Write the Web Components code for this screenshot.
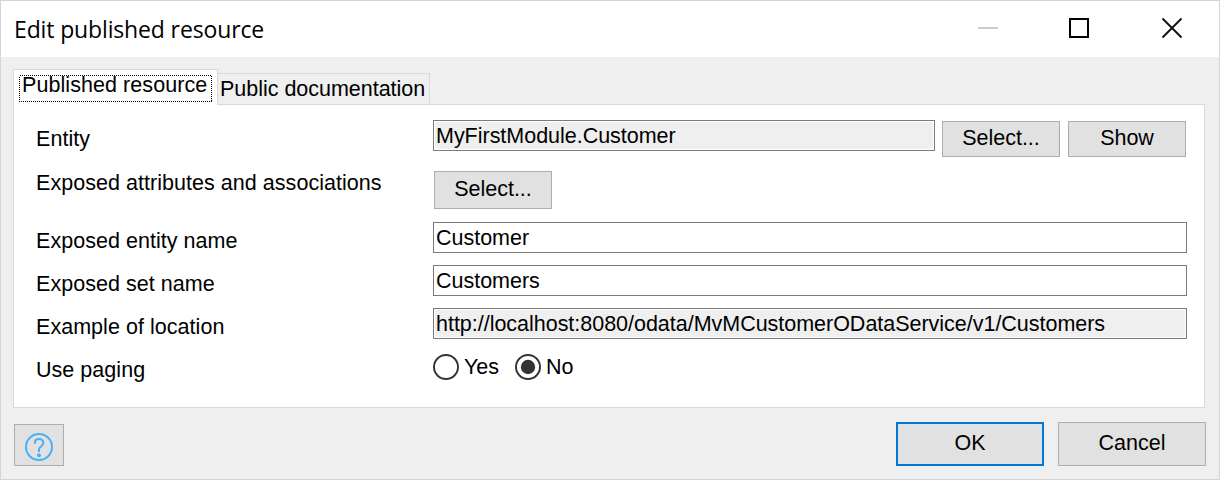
<!DOCTYPE html>
<html lang="en">
<head>
<meta charset="utf-8">
<title>Edit published resource</title>
<style>
html, body { margin: 0; }
body { width: 1220px; height: 480px; overflow: hidden; background: #efefef; color: #000; font: 21.5px/24px "Liberation Sans", Arial, sans-serif; letter-spacing: -.02px; }
</style>
</head>
<body>
<resource-dialog></resource-dialog>
<script>
const define = (name, html, setup) => customElements.define(name, class extends HTMLElement {
  constructor() {
    super();
    this.attachShadow({ mode: "open" }).innerHTML = html;
  }
  connectedCallback() { if (setup) setup(this); }
});

define("title-bar", `
<style>
:host { display: flex; box-sizing: border-box; height: 56px; padding: 0 35px 0 13px; background: #fff; }
.title { flex: 1; font: 23px/30px "Open Sans", "Noto Sans", sans-serif; letter-spacing: -.14px; padding-top: 13px; }
svg { display: block; }
</style>
<div class="title"><slot></slot></div>
<svg width="206" height="56" viewBox="0 0 206 56" fill="none">
<path d="M0 27H20" stroke="#ccc" stroke-width="2"/>
<rect x="92" y="18" width="18" height="18" stroke="#000" stroke-width="2"/>
<path d="M184.5 17.5L203.5 36.5M203.5 17.5L184.5 36.5" stroke="#111" stroke-width="1.9"/>
</svg>`);

define("tab-item", `
<style>
:host { display: block; box-sizing: border-box; height: 31px; border: 1px solid #d9d9d9; border-width: 1px 1px 0 0; padding: 3px 4px 0 2px; width: 212px; white-space: nowrap; }
:host([active]) { width: 205px; height: 36px; border-left-width: 1px; background: #fff; margin-bottom: -1px; padding: 5px 5px 0; letter-spacing: .07px; }
svg { display: none; }
:host([active]) .label { display: grid; width: 193px; height: 27px; }
:host([active]) svg { display: block; grid-area: 1 / 1; }
:host([active]) span { grid-area: 1 / 1; padding-left: 3px; margin-top: -2px; }
</style>
<div class="label"><svg width="193" height="27"><rect x=".5" y=".5" width="192" height="26" fill="none" stroke="#000" stroke-dasharray="1 1" shape-rendering="crispEdges"/></svg><span><slot></slot></span></div>`);

define("form-row", `
<style>
:host { display: grid; grid-template-columns: 397px 1fr; align-items: start; }
.label { padding-top: var(--label-top, 7px); letter-spacing: .04px; white-space: nowrap; }
.control { display: flex; align-items: start; }
</style>
<div class="label"></div><div class="control"><slot></slot></div>`,
el => { el.shadowRoot.querySelector(".label").textContent = el.getAttribute("label"); });

define("text-field", `
<style>
:host { display: block; flex: 1; box-sizing: border-box; height: 31px; border: 1px solid #7a7a7a; padding: 1px; background: #fff; }
.value { height: 27px; line-height: 24px; padding: 2px 0 0 1px; box-sizing: border-box; white-space: nowrap; }
:host([readonly]) .value { background: #efefef; }
</style>
<div class="value"><slot></slot></div>`);

define("push-button", `
<style>
:host { display: flex; box-sizing: border-box; width: 118px; height: 36px; border: 1px solid #adadad; background: #e1e1e1; align-items: center; justify-content: center; padding-bottom: 2px; }
:host([primary]) { border: 2px solid #0078d7; }
</style>
<slot></slot>`);

define("radio-option", `
<style>
:host { display: flex; gap: 5px; }
circle.dot { display: none; }
:host([checked]) circle.dot { display: block; }
span { padding-top: 1px; }
</style>
<svg width="26" height="26"><circle cx="13" cy="13" r="12" fill="#fff" stroke="#333" stroke-width="1.9"/><circle class="dot" cx="13" cy="13" r="7.2" fill="#333"/></svg>
<span><slot></slot></span>`);

define("help-icon", `
<style>:host { display: block; } svg { display: block; }</style>
<svg width="30" height="30" viewBox="0 0 30 30" fill="none" stroke="#49b1f7" stroke-width="2"><circle cx="15" cy="15" r="13"/><path d="M10.9 11.8V11C10.9 8.5 12.6 7 15 7s4.3 1.6 4.3 3.9c0 1.8-1 2.8-2.4 3.7-1.3.8-1.9 1.6-1.9 3V20"/><circle cx="15" cy="23.2" r="2" fill="#49b1f7" stroke="none"/></svg>`);

define("resource-dialog", `
<style>
:host { display: flex; flex-direction: column; box-sizing: border-box; width: 1220px; height: 480px; border: 1px solid #d4d4d4; background: #efefef; }
.tabs { display: flex; align-items: flex-end; height: 35px; margin: 12px 0 0 12px; }
tab-item[active] { position: relative; z-index: 1; }
.panel { box-sizing: border-box; width: 1192px; height: 304px; margin-left: 12px; border: 1px solid #d9d9d9; background: #fff; padding: 15px 17px 0 22px; }
form-row { width: 1151px; }
.r1 { height: 51px; } .r2 { height: 51px; --label-top: 0px; } .r3, .r4 { height: 43px; } .r5 { height: 46px; } .r6 { --label-top: 4px; }
.entity { margin-right: 7px; }
.r1 push-button { margin: 1px 8px 0 0; }
.r1 push-button:last-child { margin-right: 1px; }
.r2 push-button { height: 38px; margin-left: 1px; }
.yes { width: 82px; }
.actions { display: flex; gap: 14px; align-items: flex-end; padding: 14px 13px 0; }
.actions push-button { width: 148px; height: 44px; }
.actions .help { width: 50px; height: 42px; margin-right: auto; padding: 4px 0 0; }
</style>
<title-bar>Edit published resource</title-bar>
<div class="tabs"><tab-item active>Published resource</tab-item><tab-item>Public documentation</tab-item></div>
<div class="panel">
<form-row class="r1" label="Entity"><text-field class="entity" readonly>MyFirstModule.Customer</text-field><push-button>Select...</push-button><push-button>Show</push-button></form-row>
<form-row class="r2" label="Exposed attributes and associations"><push-button>Select...</push-button></form-row>
<form-row class="r3" label="Exposed entity name"><text-field>Customer</text-field></form-row>
<form-row class="r4" label="Exposed set name"><text-field>Customers</text-field></form-row>
<form-row class="r5" label="Example of location"><text-field readonly>http://localhost:8080/odata/MvMCustomerODataService/v1/Customers</text-field></form-row>
<form-row class="r6" label="Use paging"><radio-option class="yes">Yes</radio-option><radio-option checked>No</radio-option></form-row>
</div>
<div class="actions"><push-button class="help"><help-icon></help-icon></push-button><push-button primary>OK</push-button><push-button>Cancel</push-button></div>`);
</script>
</body>
</html>
